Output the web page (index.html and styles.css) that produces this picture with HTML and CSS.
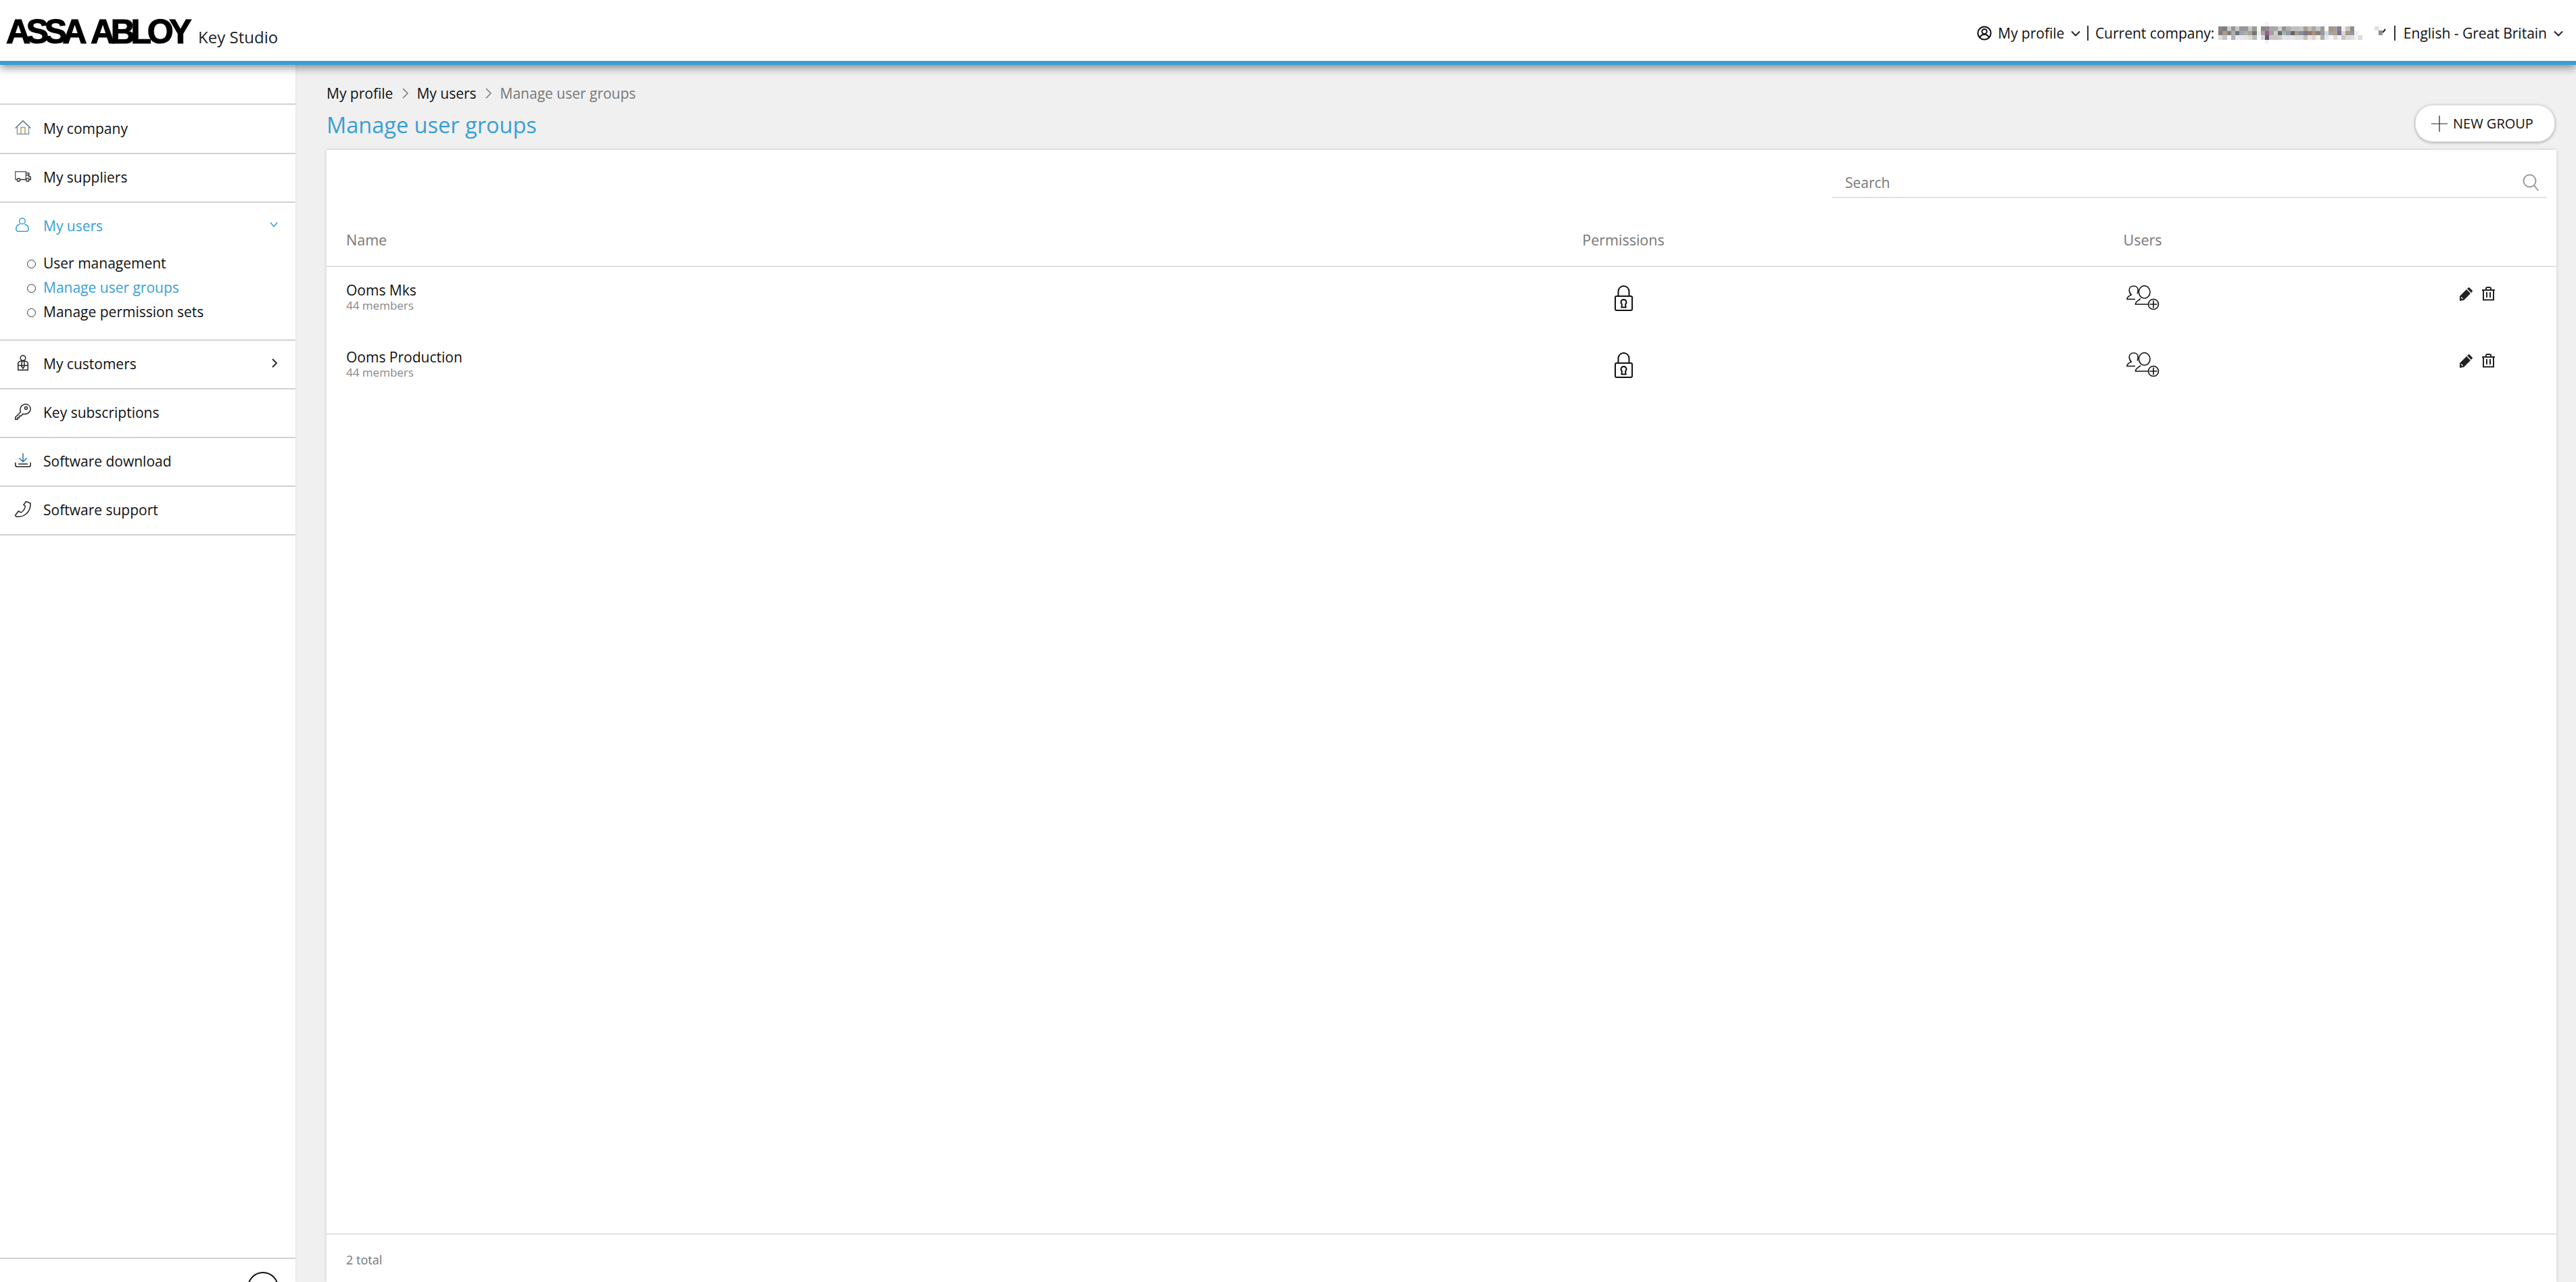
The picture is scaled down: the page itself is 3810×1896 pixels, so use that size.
FILE: index.html
```html
<!DOCTYPE html>
<html lang="en">
<head>
<meta charset="utf-8">
<title>Manage user groups</title>
<link rel="stylesheet" href="styles.css">
</head>
<body>
<div class="app">
<header class="topbar">
  <div class="brand"><span class="logo">ASSA ABLOY</span><span class="product">Key Studio</span></div>
  <nav class="topnav">
    <svg class="ic-profile" viewBox="0 0 22 22"><circle cx="11" cy="11" r="9.6"/><circle cx="11" cy="8.6" r="3.6"/><path d="M4.5 17.5c1-3.4 3.4-4.4 6.5-4.4s5.500 1 6.500 4.400"/></svg>
    <span class="t-profile">My profile</span>
    <svg class="chev" viewBox="0 0 14 9"><path d="M1 1.500l6 6 6-6"/></svg>
    <span class="sep"></span>
    <span>Current company:</span>
    <svg class="mosaic" viewBox="0 0 36 5" preserveAspectRatio="none" shape-rendering="crispEdges">
      <rect x="11" y="0" width="1" height="5" fill="#f3f2f3"/>
      <g transform="translate(0 1)">
      <rect x="0" width="1" height="1" fill="#8a8686"/><rect x="1" width="1" height="1" fill="#857c7c"/><rect x="2" width="1" height="1" fill="#c6c8cc"/><rect x="3" width="1" height="1" fill="#96979b"/><rect x="4" width="1" height="1" fill="#c4c5c9"/><rect x="5" width="1" height="1" fill="#96979a"/><rect x="6" width="1" height="1" fill="#98989a"/><rect x="7" width="1" height="1" fill="#c5c5c1"/><rect x="8" width="1" height="1" fill="#9c9c98"/><rect x="9" width="1" height="1" fill="#f8f8fa"/><rect x="10" width="1" height="1" fill="#8b8985"/><rect x="11" width="1" height="1" fill="#9b7f96"/><rect x="12" width="1" height="1" fill="#a8a6aa"/><rect x="13" width="1" height="1" fill="#b0a6a8"/><rect x="14" width="1" height="1" fill="#ccd0cb"/><rect x="15" width="1" height="1" fill="#94938f"/><rect x="16" width="1" height="1" fill="#b0aeac"/><rect x="17" width="1" height="1" fill="#c0c2c0"/><rect x="18" width="1" height="1" fill="#bfc0be"/><rect x="19" width="1" height="1" fill="#c6c5cb"/><rect x="20" width="1" height="1" fill="#a89e94"/><rect x="21" width="1" height="1" fill="#c2bfb9"/><rect x="22" width="1" height="1" fill="#a8a6a8"/><rect x="23" width="1" height="1" fill="#c5c5c3"/><rect x="24" width="1" height="1" fill="#9b9b99"/><rect x="25" width="1" height="1" fill="#fafafa"/><rect x="26" width="1" height="1" fill="#a8957f"/><rect x="27" width="1" height="1" fill="#9e9ea6"/><rect x="28" width="1" height="1" fill="#8c7b90"/><rect x="29" width="1" height="1" fill="#f4f2ee"/><rect x="30" width="1" height="1" fill="#c5c3bd"/><rect x="31" width="1" height="1" fill="#8f8c86"/><rect x="32" width="1" height="1" fill="#fff"/><rect x="33" width="1" height="1" fill="#fff"/>
      </g>
      <g transform="translate(0 2)">
      <rect x="0" width="1" height="1" fill="#7e7c7a"/><rect x="1" width="1" height="1" fill="#a99a8d"/><rect x="2" width="1" height="1" fill="#7f7d7c"/><rect x="3" width="1" height="1" fill="#abb1ac"/><rect x="4" width="1" height="1" fill="#6f7479"/><rect x="5" width="1" height="1" fill="#9fa8ad"/><rect x="6" width="1" height="1" fill="#adb0ab"/><rect x="7" width="1" height="1" fill="#a3a198"/><rect x="8" width="1" height="1" fill="#777772"/><rect x="9" width="1" height="1" fill="#e8edf4"/><rect x="10" width="1" height="1" fill="#a7a5a0"/><rect x="11" width="1" height="1" fill="#8c6184"/><rect x="12" width="1" height="1" fill="#a59fa2"/><rect x="13" width="1" height="1" fill="#cdd0c8"/><rect x="14" width="1" height="1" fill="#646a73"/><rect x="15" width="1" height="1" fill="#a5b0a8"/><rect x="16" width="1" height="1" fill="#8f98a4"/><rect x="17" width="1" height="1" fill="#6e625f"/><rect x="18" width="1" height="1" fill="#a09a98"/><rect x="19" width="1" height="1" fill="#8f8a90"/><rect x="20" width="1" height="1" fill="#7d7488"/><rect x="21" width="1" height="1" fill="#917b66"/><rect x="22" width="1" height="1" fill="#a38f80"/><rect x="23" width="1" height="1" fill="#857f78"/><rect x="24" width="1" height="1" fill="#9a9a98"/><rect x="25" width="1" height="1" fill="#c6dcef"/><rect x="26" width="1" height="1" fill="#b1a28e"/><rect x="27" width="1" height="1" fill="#a4a2a4"/><rect x="28" width="1" height="1" fill="#7d6f90"/><rect x="29" width="1" height="1" fill="#d8d6d2"/><rect x="30" width="1" height="1" fill="#a09c88"/><rect x="31" width="1" height="1" fill="#9096a6"/><rect x="32" width="1" height="1" fill="#eeeef0"/><rect x="33" width="1" height="1" fill="#fff"/>
      </g>
      <g transform="translate(0 3)">
      <rect x="0" width="1" height="1" fill="#e2dfda"/><rect x="1" width="1" height="1" fill="#bfc4cd"/><rect x="2" width="1" height="1" fill="#f6f6f6"/><rect x="3" width="1" height="1" fill="#b3b3b3"/><rect x="4" width="1" height="1" fill="#eaeaea"/><rect x="5" width="1" height="1" fill="#e6e8ec"/><rect x="6" width="1" height="1" fill="#e6e6e4"/><rect x="7" width="1" height="1" fill="#dcdcd4"/><rect x="8" width="1" height="1" fill="#b9bbc0"/><rect x="9" width="1" height="1" fill="#f6f6f8"/><rect x="10" width="1" height="1" fill="#dbd9d4"/><rect x="11" width="1" height="1" fill="#68587a"/><rect x="12" width="1" height="1" fill="#c9c7c5"/><rect x="13" width="1" height="1" fill="#c9c3bf"/><rect x="14" width="1" height="1" fill="#cfcac4"/><rect x="15" width="1" height="1" fill="#e4e5e5"/><rect x="16" width="1" height="1" fill="#dfe1e6"/><rect x="17" width="1" height="1" fill="#e4e4e0"/><rect x="18" width="1" height="1" fill="#dbdbe2"/><rect x="19" width="1" height="1" fill="#dcdce2"/><rect x="20" width="1" height="1" fill="#c7c1b9"/><rect x="21" width="1" height="1" fill="#e9e7e7"/><rect x="22" width="1" height="1" fill="#ded6cf"/><rect x="23" width="1" height="1" fill="#f2f0ec"/><rect x="24" width="1" height="1" fill="#afafae"/><rect x="25" width="1" height="1" fill="#e6e8ec"/><rect x="26" width="1" height="1" fill="#f2f5f8"/><rect x="27" width="1" height="1" fill="#e2dcd6"/><rect x="28" width="1" height="1" fill="#f2f2f0"/><rect x="29" width="1" height="1" fill="#c7c4d8"/><rect x="30" width="1" height="1" fill="#dedad8"/><rect x="31" width="1" height="1" fill="#e3dfd6"/><rect x="32" width="1" height="1" fill="#edf2f7"/><rect x="33" width="1" height="1" fill="#dcdbda"/>
      </g>
    </svg>
    <svg class="mini" viewBox="0 0 17 20" shape-rendering="crispEdges"><rect x="0" y="0" width="6" height="6" fill="#e0e0dc"/><rect x="6" y="0" width="6" height="6" fill="#f4f8fc"/><rect x="6" y="6" width="6" height="7" fill="#8f8f92"/><path class="mark" d="M12.500 9l3.500-5" shape-rendering="auto"/></svg>
    <span class="sep"></span>
    <span>English - Great Britain</span>
    <svg class="chev" viewBox="0 0 14 9"><path d="M1 1.500l6 6 6-6"/></svg>
  </nav>
</header>
<div class="layout">
  <aside class="sidebar">
    <ul class="menu">
      <li class="item"><svg class="mi home" viewBox="0 0 24 21"><path class="hr" d="M.7 11.500L12 .7l11.300 10.800"/><path d="M3.500 9v11.300h17V9"/><path class="hd" d="M9 20.300V10.500h6v9.800"/></svg><span>My company</span></li>
      <li class="item"><svg class="mi truck" viewBox="0 0 24 16"><path class="p" d="M3 12.500H.7V.7h15.600v11.800"/><path d="M8 12.500h8.300M16.300 3h4.500v5.500h2.500v4h-2"/><path d="M16.300 6h4.500"/><circle cx="5.500" cy="13" r="2.200"/><circle cx="18.800" cy="13" r="2.200"/></svg><span>My suppliers</span></li>
      <li class="group">
        <div class="item open"><svg class="mi user" viewBox="0 0 20 21"><circle cx="10" cy="5" r="4.300"/><path d="M6.500 9.500C3 10.500 .8 13 .8 16.500c0 2.500 1.500 3.800 4 3.800h10.400c2.500 0 4-1.300 4-3.800 0-3.500-2.200-6-5.700-7"/></svg><span>My users</span><svg class="down" viewBox="0 0 12 9"><path d="M1 1l5 6 5-6"/></svg></div>
        <ul class="sub">
          <li>User management</li>
          <li class="active">Manage user groups</li>
          <li>Manage permission sets</li>
        </ul>
      </li>
      <li class="item"><svg class="mi cust" viewBox="0 0 16 23"><circle cx="8" cy="4.500" r="3.800"/><path d="M5 9c-2 .5-4.300 1.500-4.300 4v9.300h14.600V13c0-2.500-2.300-3.500-4.300-4zM.7 15.500h14.600M6.500 9l-.8 7 2.300 4 2.300-4-.8-7z"/></svg><span>My customers</span><svg class="right" viewBox="0 0 9 14"><path d="M1 1l6 6-6 6"/></svg></li>
      <li class="item"><svg class="mi" viewBox="0 0 24 24"><path d="M8.500 12.500L.8 20v3.200h3.200v-2.500h2.500v-2.500h2.500l3-3c.9.300 1.500.4 2.400.4 4.500 0 8.800-3.400 8.800-8C22.800 3.600 19.700.8 15.800.8c-4.300 0-8 3.500-8 8 0 1.300.2 2.600.7 3.700z"/><circle cx="16.500" cy="6.500" r="2"/></svg><span>Key subscriptions</span></li>
      <li class="item"><svg class="mi dl" viewBox="0 0 24 21"><path class="a" d="M12 .5v12M6.500 7.500L12 13l5.500-5.500"/><path d="M.8 14v3.500c0 1.800 1 2.800 2.700 2.800h17c1.700 0 2.700-1 2.700-2.800V14M5 16.300h14"/></svg><span>Software download</span></li>
      <li class="item"><svg class="mi" viewBox="0 0 24 24"><path d="M16.500.8l6.500 2.400c.3 6-1.500 11.300-5.500 15S9 23.500 4 23.200c-2 0-3.300-.7-3.300-2.200l4.500-6 4 2c2.800-1.900 5.800-5.500 6.300-9.500l-2.500-2z"/></svg><span>Software support</span></li>
    </ul>
    <div class="foot"><span class="collapse"></span></div>
  </aside>
  <main class="main">
    <div class="crumbs"><a>My profile</a><svg class="cr" viewBox="0 0 9 16"><path d="M1 1l7 7-7 7"/></svg><a>My users</a><svg class="cr" viewBox="0 0 9 16"><path d="M1 1l7 7-7 7"/></svg><span>Manage user groups</span></div>
    <div class="titlebar">
      <h1>Manage user groups</h1>
      <button class="newbtn"><svg viewBox="0 0 24 24"><path d="M12 0v24M0 12h24"/></svg>NEW GROUP</button>
    </div>
    <section class="card">
      <div class="searchwrap"><div class="search"><span>Search</span><svg viewBox="0 0 24 26"><circle cx="10.500" cy="10.500" r="9"/><path d="M17 17l6 8"/></svg></div></div>
      <div class="row head"><div>Name</div><div class="c">Permissions</div><div class="c">Users</div><div></div></div>
      <div class="row body">
        <div class="name"><div>Ooms Mks</div><small>44 members</small></div>
        <div class="c"><svg class="lock" viewBox="0 0 27 38"><use href="#lock"/></svg></div>
        <div class="c"><svg class="adduser" viewBox="0 0 49 36"><use href="#adduser"/></svg></div>
        <div class="acts"><svg class="pen" viewBox="0 0 21 21"><use href="#pen"/></svg><svg class="bin" viewBox="0 0 19 21"><use href="#bin"/></svg></div>
      </div>
      <div class="row body">
        <div class="name"><div>Ooms Production</div><small>44 members</small></div>
        <div class="c"><svg class="lock" viewBox="0 0 27 38"><use href="#lock"/></svg></div>
        <div class="c"><svg class="adduser" viewBox="0 0 49 36"><use href="#adduser"/></svg></div>
        <div class="acts"><svg class="pen" viewBox="0 0 21 21"><use href="#pen"/></svg><svg class="bin" viewBox="0 0 19 21"><use href="#bin"/></svg></div>
      </div>
      <div class="spacer"></div>
      <div class="total">2 total</div>
    </section>
  </main>
</div>
</div>
<svg class="defs" width="0" height="0">
  <defs>
    <g id="lock"><path class="s" d="M5.500 16V9a8 8 0 0 1 16 0v7"/><rect class="s" x="1" y="16" width="25" height="21" rx="2"/><path class="s" d="M13.500 21a4 4 0 0 1 2.600 7l.5 4.500h-6.200l.5-4.500a4 4 0 0 1 2.600-7z"/></g>
    <g id="adduser"><path class="t" d="M16 12.500c1-1.500 1.200-3.500 1.200-5.500 0-3.500-2.700-6-6.500-6S4.200 3.500 4.200 7c0 3 1 5 3 7C4 16 1 16.500 1 20.500h12"/><ellipse class="t" cx="26.700" cy="10" rx="8.300" ry="9.300"/><path class="t" d="M21 19.500c-3 3.500-7.500 3.500-7.500 8.500H32"/><circle class="w" cx="40" cy="28" r="7.500"/><path class="t" d="M40 22.500v11M34.500 28h11"/></g>
    <g id="pen"><path class="f" d="M15.500 1.500l4 4a1.500 1.500 0 0 1 0 2L18 9l-6-6 1.500-1.500a1.500 1.500 0 0 1 2 0zM11 4l6 6L7 20l-6 1 0-7z"/><path class="pt" d="M3 15.500l2.500 2.500"/></g>
    <g id="bin"><path class="t2" d="M0 5h19M6 5V2.500C6 1.500 7 1 8 1h3c1 0 2 .5 2 1.500V5M2 5v14.500h15V5M7 8v8M12 8v8"/></g>
  </defs>
</svg>
</body>
</html>
```
FILE: styles.css
```css
* { box-sizing: border-box; }
html, body { margin: 0; padding: 0; height: 100%; overflow: hidden; }
body { font-family: "Open Sans", "Noto Sans", sans-serif; font-size: 21px; color: #111; background: #f0f0f0; }
ul { list-style: none; margin: 0; padding: 0; }
svg { display: block; flex: none; }
.defs { position: absolute; }
.app { display: flex; flex-direction: column; height: 1896px; }

.topbar { flex: none; height: 96px; background: #fff; border-bottom: 6px solid #3a9fd5; display: flex; justify-content: space-between; padding: 0 19px 0 9px; box-shadow: 0 4px 12px rgba(0,0,0,.45); position: relative; z-index: 2; }
.brand { display: flex; align-items: baseline; padding-top: 22px; height: 70px; }
.logo { font-family: "Liberation Sans", sans-serif; font-weight: 700; font-size: 50px; letter-spacing: -6.4px; word-spacing: 8px; color: #000; -webkit-text-stroke: 1.2px #000; line-height: 1; }
.product { font-size: 24px; margin-left: 16px; color: #222; }
.topnav { display: flex; align-items: center; height: 100%; padding-top: 8px; line-height: 1; }
.ic-profile { width: 22px; height: 22px; fill: none; stroke: #111; stroke-width: 2; margin-right: 9px; }
.chev { width: 14px; height: 9px; fill: none; stroke: #222; stroke-width: 2; margin-left: 10px; }
.sep { width: 1.500px; height: 22px; background: #333; margin: 0 12px; }
.chev + .sep { margin: 0 10px; }
.mosaic { width: 226px; height: 32px; margin-left: 6px; }
.mini { width: 17px; height: 20px; margin-left: 5px; }
.mark { fill: none; stroke: #111; stroke-width: 2; }

.layout { flex: 1; display: flex; min-height: 0; }
.sidebar { width: 437px; flex: none; background: #fff; display: flex; flex-direction: column; padding-top: 57px; box-shadow: 0 0 3px rgba(0,0,0,.08); }
.menu { flex: 1; border-top: 2px solid #d2d2d2; }
.menu > li { border-bottom: 2px solid #d2d2d2; }
.item { display: flex; align-items: center; height: 70px; padding: 0 0 5px 22px; position: relative; }
.menu > li.item { height: 72px; }
.menu > li.item:first-child { height: 73px; }
.item > span { position: absolute; left: 64px; margin-top: 3px; }
.mi { width: 24px; height: 24px; fill: none; stroke: #222; stroke-width: 1.500; }
.home { height: 21px; stroke: #7d9ab8; }
.home .hr { stroke: #5e6e80; }
.home .hd { stroke: #c09a5a; }
.truck { height: 16px; stroke: #333; }
.truck .p { stroke: #6a5d9a; }
.user { width: 20px; height: 21px; margin-left: 1px; stroke: #3a9fd5; }
.cust { width: 16px; height: 23px; margin-left: 4px; }
.dl { height: 21px; }
.dl .a { stroke: #2a6fa8; }
.open { color: #3a9fd5; }
.down { position: absolute; right: 26px; width: 12px; height: 9px; fill: none; stroke: #3a9fd5; stroke-width: 1.500; }
.right { position: absolute; right: 26px; width: 9px; height: 14px; fill: none; stroke: #222; stroke-width: 1.800; }
.sub { padding: 1px 0 23px 64px; }
.sub li { line-height: 36px; height: 36px; position: relative; }
.sub li::before { content: ""; position: absolute; left: -24px; top: 13px; width: 11px; height: 11px; border: 1.500px solid #333; border-radius: 50%; }
.sub .active { color: #3a9fd5; }
.foot { flex: none; height: 36px; position: relative; border-top: 2px solid #d2d2d2; overflow: hidden; }
.collapse { position: absolute; left: 366px; top: 19px; width: 46px; height: 46px; border: 2.500px solid #111; border-radius: 50%; }

.main { flex: 1; padding: 0 29px 0 46px; min-width: 0; display: flex; flex-direction: column; }
.crumbs { display: flex; align-items: center; height: 30px; margin-top: 27px; flex: none; }
.crumbs a { color: #111; }
.crumbs span { color: #777; }
.cr { width: 9px; height: 16px; margin: 0 12.500px 0 13.500px; fill: none; stroke: #777; stroke-width: 1.500; }
.titlebar { display: flex; justify-content: space-between; align-items: center; height: 66px; flex: none; }
h1 { margin: 0 0 2px; font-size: 32.5px; font-weight: 400; color: #3a9fd5; line-height: 1; }
.newbtn { width: 207px; height: 55px; margin: 0 2px 7px 0; border: 1px solid #ddd; border-radius: 26px; background: #fff; box-shadow: 0 1px 4px rgba(0,0,0,.3); font: 400 20px "Open Sans", sans-serif; color: #111; display: flex; align-items: center; padding: 0 0 0 23px; }
.newbtn svg { width: 24px; height: 24px; margin-right: 8px; fill: none; stroke: #222; stroke-width: 1.200; }

.card { flex: 1; background: #fff; box-shadow: 0 0 6px rgba(0,0,0,.14); display: flex; flex-direction: column; min-height: 0; margin-top: 3px; }
.searchwrap { display: flex; justify-content: flex-end; padding: 22px 14px 0 0; flex: none; }
.search { width: 1057px; height: 49px; border-bottom: 2px solid #e2e2e2; display: flex; align-items: center; justify-content: space-between; padding: 4px 12px 0 19px; color: #777; font-size: 21px; }
.search svg { width: 24px; height: 26px; fill: none; stroke: #999; stroke-width: 2; }
.row { display: grid; grid-template-columns: 1541px 754px 782px 1fr; align-items: center; flex: none; }
.row .c { text-align: center; }
.row .c svg { margin: 0 auto; }
.row.head { height: 102px; border-bottom: 2px solid #e2e2e2; color: #777; font-size: 21.500px; padding-top: 22px; margin-bottom: 12px; }
.head > div:first-child, .name { padding-left: 29px; }
.body { height: 99px; align-items: start; }
.name { line-height: 1; font-size: 21px; padding-top: 12px; }
.name small { display: block; font-size: 17px; color: #888; margin-top: 2px; line-height: 20px; }
.body .c { padding-top: 15px; }
.lock { width: 27px; height: 38px; }
.adduser { width: 49px; height: 36px; }
.s { fill: none; stroke: #111; stroke-width: 2; }
.t { fill: none; stroke: #111; stroke-width: 1.600; }
.w { fill: #fff; stroke: #111; stroke-width: 1.600; }
.t2 { fill: none; stroke: #222; stroke-width: 2; }
.f { fill: #222; }
.pt { fill: none; stroke: #fff; stroke-width: 1.200; }
.acts { display: flex; gap: 13px; padding: 17px 0 0 77px; }
.pen { width: 21px; height: 21px; }
.bin { width: 19px; height: 21px; }
.spacer { flex: 1; }
.total { flex: none; height: 72px; border-top: 2px solid #e2e2e2; padding: 25px 0 0 29px; font-size: 18px; color: #777; line-height: 24px; }
```
